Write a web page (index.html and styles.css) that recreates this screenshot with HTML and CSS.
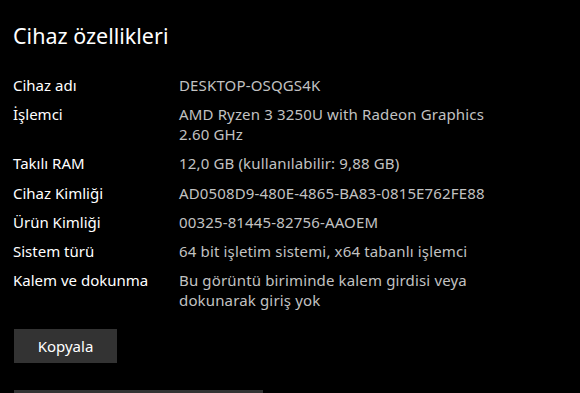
FILE: index.html
```html
<!DOCTYPE html>
<html lang="tr">

<head>
    <meta charset="UTF-8">
    <meta name="viewport" content="width=device-width, initial-scale=1.0">
    <link rel="stylesheet" href="styles.css">
</head>

<body>
    <div class="panel">
        <h1 class="panel-title">Cihaz özellikleri</h1>

        <!-- Device spec rows -->
        <div class="spec-list">
            <div class="spec-row">
                <div class="spec-label">Cihaz adı</div>
                <div class="spec-value">DESKTOP-OSQGS4K</div>
            </div>
            <div class="spec-row">
                <div class="spec-label">İşlemci</div>
                <div class="spec-value">AMD Ryzen 3 3250U with Radeon Graphics<br>2.60 GHz</div>
            </div>
            <div class="spec-row">
                <div class="spec-label">Takılı RAM</div>
                <div class="spec-value">12,0 GB (kullanılabilir: 9,88 GB)</div>
            </div>
            <div class="spec-row">
                <div class="spec-label">Cihaz Kimliği</div>
                <div class="spec-value">AD0508D9-480E-4865-BA83-0815E762FE88</div>
            </div>
            <div class="spec-row">
                <div class="spec-label">Ürün Kimliği</div>
                <div class="spec-value">00325-81445-82756-AAOEM</div>
            </div>
            <div class="spec-row">
                <div class="spec-label">Sistem türü</div>
                <div class="spec-value">64 bit işletim sistemi, x64 tabanlı işlemci</div>
            </div>
            <div class="spec-row">
                <div class="spec-label">Kalem ve dokunma</div>
                <div class="spec-value">Bu görüntü biriminde kalem girdisi veya<br>dokunarak giriş yok</div>
            </div>
        </div>

        <button class="copy-button">Kopyala</button>

        <div class="next-bar"></div>
    </div>
</body>

</html>
```

FILE: styles.css
```css
body {
    margin: 0;
    background-color: #000;
    font-family: 'Noto Sans', 'Open Sans', sans-serif;
    color: #fff;
    overflow: hidden;
    height: 393px;
}

.panel {
    padding: 22px 14px 0 13px;
}

.panel-title {
    margin: 0 0 25px 0;
    font-size: 21.5px;
    font-weight: normal;
    line-height: 28px;
}

.spec-list {
    display: flex;
    flex-direction: column;
    gap: 9.2px;
}

.spec-row {
    display: flex;
    font-size: 15px;
    line-height: 20px;
}

.spec-label {
    width: 166px;
    flex-shrink: 0;
    color: #fff;
}

.spec-value {
    color: #c2c2c2;
    letter-spacing: 0.15px;
}

.copy-button {
    display: block;
    margin: 19px 0 0 1px;
    width: 103px;
    height: 34px;
    border: none;
    background-color: #333;
    color: #fff;
    font-family: 'Noto Sans', 'Open Sans', sans-serif;
    font-size: 15px;
    padding: 0;
}

.next-bar {
    margin: 27px 0 0 1px;
    width: 249px;
    height: 34px;
    background-color: #333;
}
```
